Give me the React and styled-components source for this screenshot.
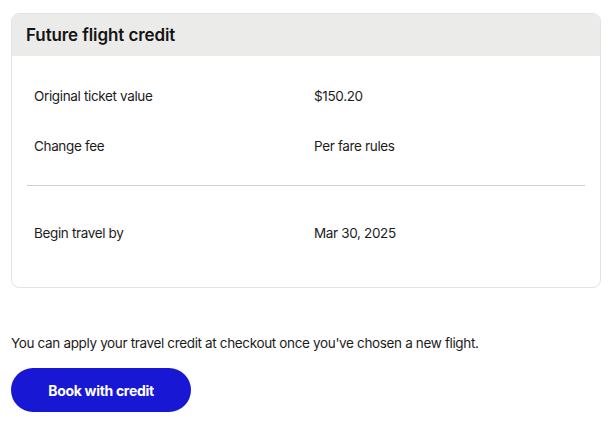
import styled, { createGlobalStyle } from "styled-components";

const GlobalStyle = createGlobalStyle`
  body {
    margin: 0;
    background: #ffffff;
    font-family: Inter, "Noto Sans", sans-serif;
    color: #1c1c1c;
  }
`;

const rows = [
  { label: "Original ticket value", value: "$150.20" },
  { label: "Change fee", value: "Per fare rules" },
];

const App = () => {
  return (
    <>
      <GlobalStyle />
      <Page>
        <Card>
          <CardHeader>Future flight credit</CardHeader>
          <CardBody>
            {rows.map((row) => (
              <Row key={row.label}>
                <Label>{row.label}</Label>
                <Value>{row.value}</Value>
              </Row>
            ))}
            <Divider />
            <Row $tall>
              <Label>Begin travel by</Label>
              <Value>Mar 30, 2025</Value>
            </Row>
          </CardBody>
        </Card>
        <Note>You can apply your travel credit at checkout once you've chosen a new flight.</Note>
        <BookButton>Book with credit</BookButton>
      </Page>
    </>
  );
};

const Page = styled.div`
  padding: 13px 8px 0 11px;
  width: 590px;
`;

const Card = styled.div`
  border: 1px solid #e3e3e3;
  border-radius: 8px;
  overflow: hidden;
`;

const CardHeader = styled.div`
  background: #ebebe9;
  height: 42px;
  display: flex;
  align-items: center;
  padding: 0 14px;
  font-size: 17px;
  font-weight: 600;
  letter-spacing: -0.1px;
  color: #141414;
`;

const CardBody = styled.div`
  padding: 15px 15px 29px;
`;

const Row = styled.div`
  display: grid;
  grid-template-columns: 280px 1fr;
  align-items: center;
  height: 50px;
  padding: 0 7px;
  margin-top: ${(p) => (p.$tall ? "22px" : "0")};
`;

const Label = styled.span`
  font-size: 13.5px;
  letter-spacing: -0.35px;
`;

const Value = styled(Label)``;

const Divider = styled.hr`
  border: none;
  border-top: 1px solid #cfcfcf;
  margin: 14px 0 0;
`;

const Note = styled.p`
  margin: 46px 0 0;
  font-size: 13.5px;
  letter-spacing: -0.35px;
  line-height: 18px;
`;

const BookButton = styled.button`
  margin-top: 16px;
  width: 180px;
  height: 44px;
  border: none;
  border-radius: 22px;
  background: #1717d4;
  color: #ffffff;
  font-family: Inter, "Noto Sans", sans-serif;
  font-size: 14px;
  font-weight: 700;
  letter-spacing: -0.3px;
  cursor: pointer;
`;

export default App;
